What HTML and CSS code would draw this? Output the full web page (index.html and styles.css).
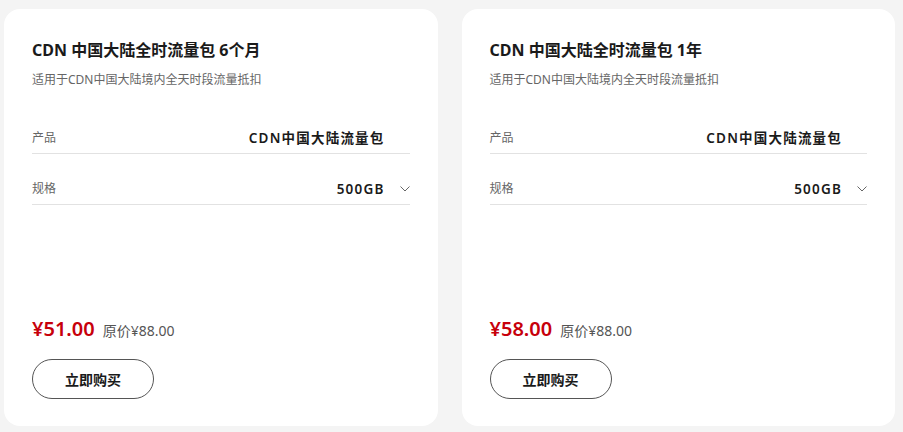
FILE: index.html
```html
<!DOCTYPE html>
<html lang="zh">
<head>
<meta charset="utf-8">
<title>CDN 流量包</title>
<link rel="stylesheet" href="styles.css">
</head>
<body>
<div class="cards">
  <div class="card">
    <div class="title">CDN 中国大陆全时流量包 6个月</div>
    <div class="desc">适用于CDN中国大陆境内全天时段流量抵扣</div>
    <div class="row">
      <span class="label">产品</span>
      <span class="value">CDN中国大陆流量包</span>
      <span class="arrow"></span>
    </div>
    <div class="row">
      <span class="label">规格</span>
      <span class="value">500GB</span>
      <span class="arrow"><svg width="10" height="6" viewBox="0 0 10 6"><path d="M0.5 0.5 L5 5 L9.5 0.5" fill="none" stroke="#666" stroke-width="1"/></svg></span>
    </div>
    <div class="bottom">
      <div class="price"><span class="now">¥51.00</span><span class="orig">原价¥88.00</span></div>
      <button class="buy">立即购买</button>
    </div>
  </div>
  <div class="card">
    <div class="title">CDN 中国大陆全时流量包 1年</div>
    <div class="desc">适用于CDN中国大陆境内全天时段流量抵扣</div>
    <div class="row">
      <span class="label">产品</span>
      <span class="value">CDN中国大陆流量包</span>
      <span class="arrow"></span>
    </div>
    <div class="row">
      <span class="label">规格</span>
      <span class="value">500GB</span>
      <span class="arrow"><svg width="10" height="6" viewBox="0 0 10 6"><path d="M0.5 0.5 L5 5 L9.5 0.5" fill="none" stroke="#666" stroke-width="1"/></svg></span>
    </div>
    <div class="bottom">
      <div class="price"><span class="now">¥58.00</span><span class="orig">原价¥88.00</span></div>
      <button class="buy">立即购买</button>
    </div>
  </div>
</div>
</body>
</html>
```
FILE: styles.css
```css
html, body {
  margin: 0;
  padding: 0;
  background: #f4f4f4;
}
body {
  font-family: "Noto Sans", "Noto Sans CJK SC", sans-serif;
  color: #1a1a1a;
}
.cards {
  display: flex;
  gap: 24px;
  padding: 9px 8px 6px 4px;
}
.card {
  flex: 1;
  height: 417px;
  box-sizing: border-box;
  background: #fff;
  border-radius: 16px;
  padding: 29px 28px 27px 28px;
  display: flex;
  flex-direction: column;
}
.title {
  font-size: 16px;
  line-height: 24px;
  font-weight: 700;
  color: #1a1a1a;
}
.desc {
  margin-top: 9px;
  font-size: 12px;
  line-height: 18px;
  color: #666;
  margin-bottom: 14px;
}
.row {
  display: flex;
  align-items: center;
  padding: 25px 0 5px 0;
  line-height: 20px;
  border-bottom: 1px solid #e2e2e2;
}
.label {
  font-size: 12px;
  color: #666;
  flex: 1;
}
.value {
  font-size: 13.5px;
  font-weight: 600;
  letter-spacing: 1.2px;
  color: #1a1a1a;
}
.arrow {
  width: 25px;
  display: flex;
  justify-content: flex-end;
  align-items: center;
  height: 20px;
}
.bottom {
  margin-top: auto;
}
.price {
  display: flex;
  align-items: baseline;
  gap: 8px;
  line-height: 28px;
}
.now {
  font-size: 20px;
  font-weight: 600;
  color: #c7000b;
}
.orig {
  font-size: 14px;
  color: #555;
}
.buy {
  margin-top: 14px;
  width: 122px;
  height: 40px;
  border: 1px solid #555;
  border-radius: 20px;
  background: #fff;
  font-family: "Noto Sans", "Noto Sans CJK SC", sans-serif;
  font-size: 14px;
  font-weight: 600;
  color: #1a1a1a;
  padding: 0;
  display: block;
}
```
